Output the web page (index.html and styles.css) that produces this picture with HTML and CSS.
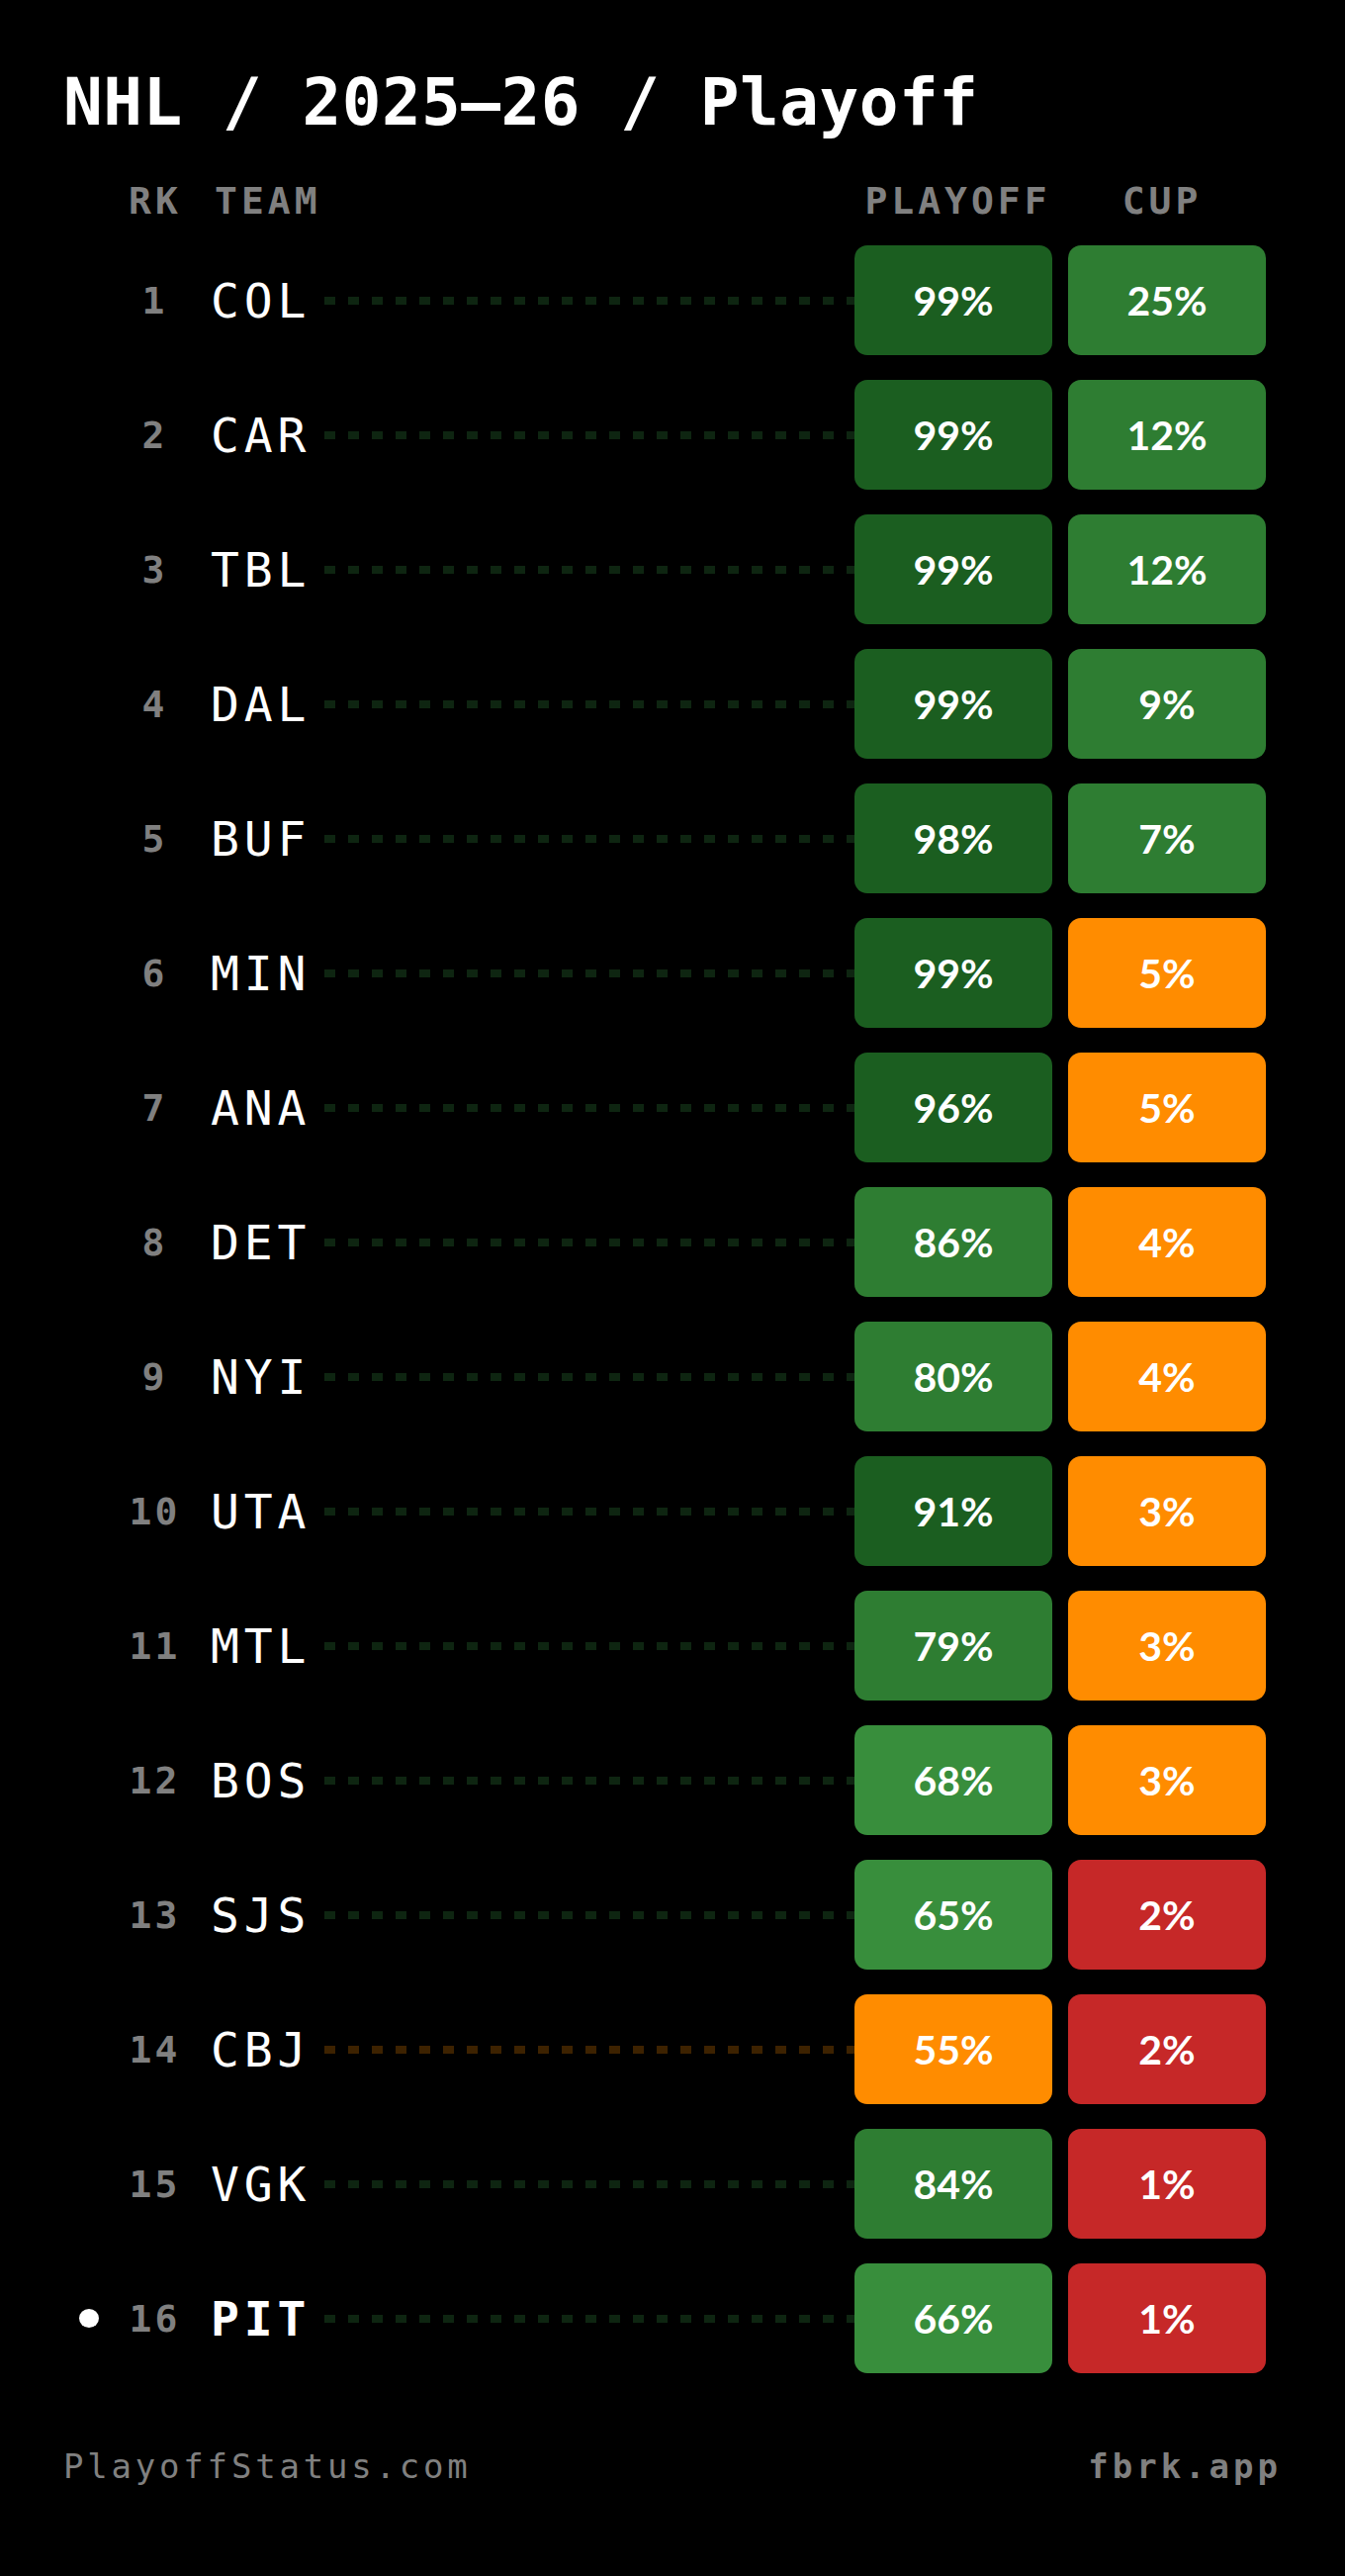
FILE: index.html
```html
<!DOCTYPE html>
<html lang="en">
<head>
<meta charset="utf-8">
<title>NHL / 2025–26 / Playoff</title>
<link rel="stylesheet" href="styles.css">
</head>
<body>
<main class="page">
  <h1 class="title">NHL / 2025–26 / Playoff</h1>

  <div class="head">
    <span class="marker"></span>
    <span class="h-rank">RK</span>
    <span class="h-team">TEAM</span>
    <span class="h-fill"></span>
    <span class="h-col h-playoff">PLAYOFF</span>
    <span class="h-col h-cup">CUP</span>
  </div>

  <div class="rows">
    <div class="row"><span class="marker"></span><span class="rank">1</span><span class="team">COL</span><span class="dots dg"></span><span class="badge g1">99%</span><span class="badge g2">25%</span></div>
    <div class="row"><span class="marker"></span><span class="rank">2</span><span class="team">CAR</span><span class="dots dg"></span><span class="badge g1">99%</span><span class="badge g2">12%</span></div>
    <div class="row"><span class="marker"></span><span class="rank">3</span><span class="team">TBL</span><span class="dots dg"></span><span class="badge g1">99%</span><span class="badge g2">12%</span></div>
    <div class="row"><span class="marker"></span><span class="rank">4</span><span class="team">DAL</span><span class="dots dg"></span><span class="badge g1">99%</span><span class="badge g2">9%</span></div>
    <div class="row"><span class="marker"></span><span class="rank">5</span><span class="team">BUF</span><span class="dots dg"></span><span class="badge g1">98%</span><span class="badge g2">7%</span></div>
    <div class="row"><span class="marker"></span><span class="rank">6</span><span class="team">MIN</span><span class="dots dg"></span><span class="badge g1">99%</span><span class="badge or">5%</span></div>
    <div class="row"><span class="marker"></span><span class="rank">7</span><span class="team">ANA</span><span class="dots dg"></span><span class="badge g1">96%</span><span class="badge or">5%</span></div>
    <div class="row"><span class="marker"></span><span class="rank">8</span><span class="team">DET</span><span class="dots dg"></span><span class="badge g2">86%</span><span class="badge or">4%</span></div>
    <div class="row"><span class="marker"></span><span class="rank">9</span><span class="team">NYI</span><span class="dots dg"></span><span class="badge g2">80%</span><span class="badge or">4%</span></div>
    <div class="row"><span class="marker"></span><span class="rank">10</span><span class="team">UTA</span><span class="dots dg"></span><span class="badge g1">91%</span><span class="badge or">3%</span></div>
    <div class="row"><span class="marker"></span><span class="rank">11</span><span class="team">MTL</span><span class="dots dg"></span><span class="badge g2">79%</span><span class="badge or">3%</span></div>
    <div class="row"><span class="marker"></span><span class="rank">12</span><span class="team">BOS</span><span class="dots dg"></span><span class="badge g3">68%</span><span class="badge or">3%</span></div>
    <div class="row"><span class="marker"></span><span class="rank">13</span><span class="team">SJS</span><span class="dots dg"></span><span class="badge g3">65%</span><span class="badge rd">2%</span></div>
    <div class="row"><span class="marker"></span><span class="rank">14</span><span class="team">CBJ</span><span class="dots do"></span><span class="badge or">55%</span><span class="badge rd">2%</span></div>
    <div class="row"><span class="marker"></span><span class="rank">15</span><span class="team">VGK</span><span class="dots dg"></span><span class="badge g2">84%</span><span class="badge rd">1%</span></div>
    <div class="row current"><span class="marker"><span class="dot-mark"></span></span><span class="rank">16</span><span class="team">PIT</span><span class="dots dg"></span><span class="badge g3">66%</span><span class="badge rd">1%</span></div>
  </div>

  <footer class="foot">
    <span class="src">PlayoffStatus.com</span>
    <span class="brand">fbrk.app</span>
  </footer>
</main>
</body>
</html>
```

FILE: styles.css
```css
html, body {
  margin: 0;
  padding: 0;
  background: #000;
}

.page {
  box-sizing: border-box;
  width: 1360px;
  min-height: 2604px;
  padding: 71px 64px 0 64px;
  color: #fff;
  font-family: "DejaVu Sans Mono", "Liberation Mono", monospace;
}

.title {
  margin: 0;
  font-size: 66px;
  line-height: 66px;
  font-weight: 700;
  letter-spacing: 0.5px;
  white-space: nowrap;
}

.head {
  display: flex;
  align-items: center;
  height: 41px;
  margin-top: 46px;
  padding: 0 16px 0 16px;
  font-weight: 700;
  font-size: 38px;
  line-height: 41px;
  letter-spacing: 4px;
  color: #808080;
}

.marker {
  flex: 0 0 20px;
  width: 20px;
  display: flex;
  align-items: center;
  justify-content: center;
}

.h-rank {
  flex: 0 0 110px;
  box-sizing: border-box;
  padding-left: 4px;
  text-align: center;
}

.h-team {
  margin-left: 7px;
}

.h-fill {
  flex: 1;
}

.h-col {
  flex: 0 0 200px;
  box-sizing: border-box;
  text-align: center;
}

.h-playoff {
  padding-left: 9px;
}

.h-cup {
  margin-left: 16px;
  padding-right: 10px;
}

.rows {
  display: flex;
  flex-direction: column;
  gap: 25px;
  margin-top: 24px;
}

.row {
  display: flex;
  align-items: center;
  height: 111px;
  padding: 0 16px 0 16px;
}

.rank {
  flex: 0 0 110px;
  box-sizing: border-box;
  padding-left: 3px;
  text-align: center;
  font-size: 38px;
  line-height: 38px;
  font-weight: 700;
  letter-spacing: 3px;
  color: #808080;
}

.team {
  margin-left: 3px;
  font-size: 48px;
  line-height: 48px;
  letter-spacing: 4.8px;
  color: #fff;
}

.current .team {
  font-weight: 700;
}

.dot-mark {
  width: 20px;
  height: 19px;
  border-radius: 50%;
  background: #fff;
}

.dots {
  flex: 1;
  height: 8px;
  margin-left: 14px;
}

.dg {
  background: repeating-linear-gradient(90deg, #0e2511 0 11px, transparent 11px 24px);
}

.do {
  background: repeating-linear-gradient(90deg, #3d2200 0 11px, transparent 11px 24px);
}

.badge {
  flex: 0 0 200px;
  height: 111px;
  border-radius: 13px;
  display: flex;
  align-items: center;
  justify-content: center;
  font-family: Lato, "Noto Sans", sans-serif;
  font-weight: 700;
  font-size: 41px;
  line-height: 41px;
  color: #fff;
}

.badge + .badge {
  margin-left: 16px;
}

.g1 { background: #1b5e20; }
.g2 { background: #2e7d32; }
.g3 { background: #388e3c; }
.or { background: #ff8c00; }
.rd { background: #c62828; }

.foot {
  display: flex;
  justify-content: space-between;
  margin-top: 74px;
  font-size: 34px;
  line-height: 40px;
  letter-spacing: 3.8px;
  color: #808080;
}

.brand {
  font-weight: 700;
  letter-spacing: 4px;
}
```
